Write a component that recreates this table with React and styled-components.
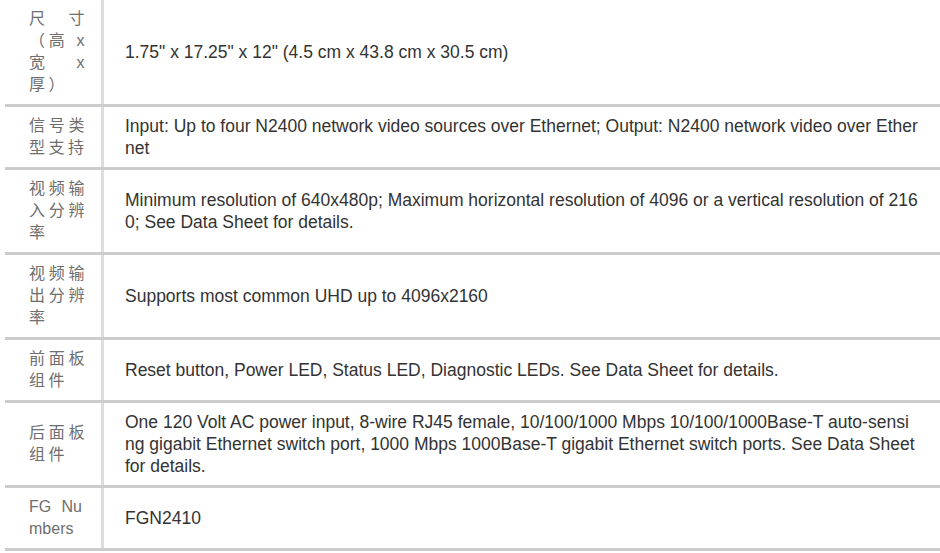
import React from 'react';
import styled, { createGlobalStyle } from 'styled-components';

const specs = [
  { label: '尺寸（高 x 宽 x 厚）', value: '1.75" x 17.25" x 12" (4.5 cm x 43.8 cm x 30.5 cm)' },
  { label: '信号类型支持', value: 'Input: Up to four N2400 network video sources over Ethernet; Output: N2400 network video over Ethernet' },
  { label: '视频输入分辨率', value: 'Minimum resolution of 640x480p; Maximum horizontal resolution of 4096 or a vertical resolution of 2160; See Data Sheet for details.' },
  { label: '视频输出分辨率', value: 'Supports most common UHD up to 4096x2160' },
  { label: '前面板组件', value: 'Reset button, Power LED, Status LED, Diagnostic LEDs. See Data Sheet for details.' },
  { label: '后面板组件', value: 'One 120 Volt AC power input, 8-wire RJ45 female, 10/100/1000 Mbps 10/100/1000Base-T auto-sensing gigabit Ethernet switch port, 1000 Mbps 1000Base-T gigabit Ethernet switch ports. See Data Sheet for details.' },
  { label: 'FG Numbers', value: 'FGN2410', latin: true },
];

const SpecTable = () => (
  <Table>
    {specs.map(spec => (
      <Row key={spec.label}>
        <Label latin={spec.latin ? 'true' : 'false'}>{spec.label}</Label>
        <Value>{spec.value}</Value>
      </Row>
    ))}
  </Table>
);

const App = () => (
  <>
    <GlobalStyle />
    <SpecTable />
  </>
);

const GlobalStyle = createGlobalStyle`
  body {
    margin: 0;
    background: #fff;
    font-family: "Liberation Sans", Arial, "Noto Sans CJK SC", sans-serif;
  }
`

const Table = styled.div`
  display: flex;
  flex-direction: column;
  margin-left: 5px;
  width: 935px;
`

const Row = styled.div`
  display: grid;
  grid-template-columns: 99px 1fr;
  border-bottom: 3px solid #cccccc;
`

const Label = styled.div`
  display: flex;
  align-items: center;
  padding: 8px ${props => props.latin === 'true' ? '19px' : '13px'} 8px 24px;
  border-right: 3px solid #dddddd;
  color: #6e6e6e;
  font-size: 16px;
  line-height: 22px;
  letter-spacing: ${props => props.latin === 'true' ? '0' : '3.5px'};
  text-align: justify;
  word-break: break-all;
`

const Value = styled.div`
  display: flex;
  align-items: center;
  padding: 8px 22px 8px 21px;
  color: #333333;
  font-size: 17.5px;
  line-height: 22px;
  word-break: break-all;
`

export default App;
